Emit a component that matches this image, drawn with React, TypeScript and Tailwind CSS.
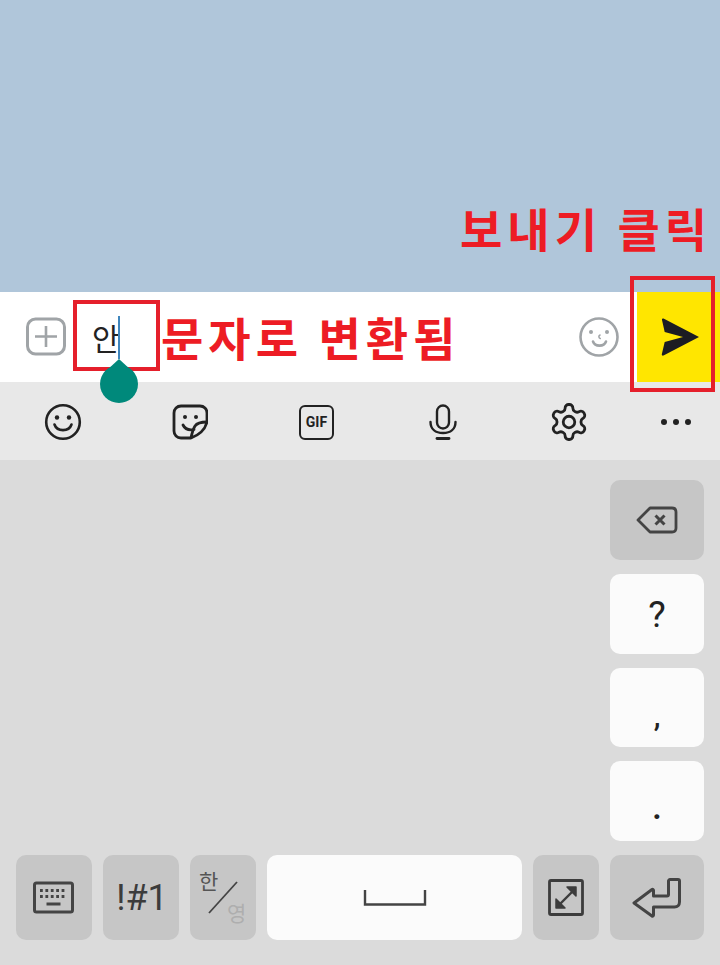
import React from "react";

const kr = "font-['Noto_Sans_CJK_KR','Noto_Sans',sans-serif]";

function Key({ className, children }: { className: string; children?: React.ReactNode }) {
  return <div className={`flex items-center justify-center rounded-[10px] ${className}`}>{children}</div>;
}

const dark = "bg-[#c6c6c6]";
const light = "bg-[#fbfbfb]";

export default function App() {
  return (
    <div className={`relative flex h-[965px] w-[720px] flex-col overflow-hidden ${kr}`}>
      <div className="h-[292px] bg-[#b0c6da]" />

      {/* input bar */}
      <div className="flex h-[90px] items-center bg-white">
        <svg className="ml-[26px]" width="40" height="40" viewBox="0 0 40 40" fill="none" stroke="#a0a4a7" strokeWidth="3">
          <rect x="1.5" y="2" width="37" height="35" rx="8" />
          <path d="M20 9v21M9 19.5h22" strokeWidth="2.6" />
        </svg>
        <div className="ml-[26px] flex h-[44px] items-center">
          <span className="text-[30px] leading-none text-[#222]">안</span>
          <span className="ml-[-2px] h-[43px] w-[2px] bg-[#3f86bd]" />
        </div>
        <div className="ml-auto mr-[18px]">
          <svg width="40" height="40" viewBox="0 0 40 40" fill="none" stroke="#a0a4a7" className="block">
            <circle cx="20" cy="20" r="18.5" strokeWidth="2.6" />
            <path d="M14 24.500c2 5.500 11 5.500 13 0" strokeWidth="2.6" strokeLinecap="round" />
            <circle cx="12" cy="15" r="2" fill="#a0a4a7" stroke="none" />
            <circle cx="28" cy="15" r="2" fill="#a0a4a7" stroke="none" />
            <path d="M21 18c-1.500 .500-1.500 3 .200 3.500" strokeWidth="1.600" strokeLinecap="round" />
          </svg>
        </div>
        <div className="flex h-full w-[83px] items-center justify-center bg-[#ffe600]">
          <svg width="40" height="40" viewBox="0 0 40 40" className="ml-[2px] block">
            <path d="M3.5 1.5 39 20 3.5 38.6c-1 .4-1.9-.3-1.7-1.3L4.7 25 23 20 4.7 15 2 2.9c-.2-1 .6-1.8 1.5-1.4z" fill="#1c1c22" />
          </svg>
        </div>
      </div>

      {/* toolbar */}
      <div className="flex h-[78px] items-center bg-[#e8e8e8] pt-[2px]">
        <div className="ml-[44px] w-[38px]">
          <svg width="38" height="38" viewBox="0 0 38 38" fill="none" stroke="#222" strokeWidth="2.6" className="block">
            <circle cx="19" cy="19" r="16.8" />
            <path d="M10.5 21.5c2.5 7.5 14.5 7.5 17 0" strokeLinecap="round" />
            <circle cx="13" cy="14.5" r="2.2" fill="#222" stroke="none" />
            <circle cx="25" cy="14.5" r="2.2" fill="#222" stroke="none" />
          </svg>
        </div>
        <div className="ml-[90px] w-[36px]">
          <svg width="36" height="36" viewBox="0 0 36 36" fill="none" stroke="#222" strokeWidth="2.8" strokeLinejoin="round" className="block">
            <path d="M19 34H9c-4 0-7-3-7-7V9c0-4 3-7 7-7h19c4 0 7 3 7 7v9c-2 8-8 13-16 16z" />
            <path d="M35 18c-6 0-10 1-12 4-2 3-3 7-4 12" />
            <path d="M11 21c2 4 6 5.500 11 4.500" strokeLinecap="round" />
            <circle cx="13" cy="13" r="2" fill="#222" stroke="none" />
            <circle cx="24" cy="13" r="2" fill="#222" stroke="none" />
          </svg>
        </div>
        <div className="ml-[91px] flex h-[35px] w-[35px] items-center justify-center rounded-[6px] border-[2.6px] border-[#222]">
          <span className="font-['Roboto',sans-serif] text-[14px] font-bold leading-none text-[#222]">GIF</span>
        </div>
        <div className="ml-[95px] w-[28px]">
          <svg width="28" height="36" viewBox="0 0 28 36" fill="none" stroke="#222" strokeWidth="2.4" strokeLinecap="round" className="block">
            <rect x="8" y="1.500" width="12" height="23" rx="6" />
            <path d="M1.500 18c0 7 5 11 12.500 11s12.500-4 12.500-11" />
            <path d="M8 34.500h12" strokeWidth="2.800" />
          </svg>
        </div>
        <div className="ml-[91px] w-[42px]">
          <svg width="42" height="42" viewBox="0 0 24 24" fill="none" stroke="#222" strokeWidth="1.600" strokeLinejoin="round" className="block">
            <path d="M12.220 2h-.44a2 2 0 0 0-2 2v.18a2 2 0 0 1-1 1.730l-.43.250a2 2 0 0 1-2 0l-.15-.08a2 2 0 0 0-2.730.730l-.22.380a2 2 0 0 0 .730 2.730l.150.100a2 2 0 0 1 1 1.720v.510a2 2 0 0 1-1 1.740l-.150.090a2 2 0 0 0-.730 2.730l.22.380a2 2 0 0 0 2.730.730l.150-.08a2 2 0 0 1 2 0l.43.250a2 2 0 0 1 1 1.730V20a2 2 0 0 0 2 2h.44a2 2 0 0 0 2-2v-.18a2 2 0 0 1 1-1.730l.43-.250a2 2 0 0 1 2 0l.150.080a2 2 0 0 0 2.730-.730l.22-.390a2 2 0 0 0-.730-2.730l-.150-.080a2 2 0 0 1-1-1.740v-.500a2 2 0 0 1 1-1.740l.150-.090a2 2 0 0 0 .730-2.730l-.22-.380a2 2 0 0 0-2.730-.730l-.150.080a2 2 0 0 1-2 0l-.43-.250a2 2 0 0 1-1-1.730V4a2 2 0 0 0-2-2z" />
            <circle cx="12" cy="12" r="3.300" />
          </svg>
        </div>
        <div className="ml-[71px] flex gap-[6px]">
          <span className="h-[6px] w-[6px] rounded-full bg-[#222]" />
          <span className="h-[6px] w-[6px] rounded-full bg-[#222]" />
          <span className="h-[6px] w-[6px] rounded-full bg-[#222]" />
        </div>
      </div>

      {/* keyboard */}
      <div className="flex flex-1 flex-col gap-[14px] bg-[#dbdbdb] pl-[16px] pr-[16px] pt-[20px]">
        <div className="flex flex-col items-end gap-[14px]">
          <Key className={`h-[80px] w-[94px] ${dark}`}>
            <svg width="42" height="28" viewBox="0 0 42 28" fill="none" stroke="#444" strokeWidth="2.8" strokeLinejoin="round" className="block">
              <path d="M14 2h22c2.500 0 4 1.500 4 4v16c0 2.500-1.500 4-4 4H14L2 14z" />
              <path d="M19.500 9.500l9 9M28.500 9.500l-9 9" strokeWidth="3" />
            </svg>
          </Key>
          <Key className={`h-[80px] w-[94px] ${light}`}>
            <span className="font-['Roboto',sans-serif] text-[37px] leading-none text-[#222]">?</span>
          </Key>
          <Key className={`h-[79px] w-[94px] ${light}`}>
            <span className="mt-[17px] font-['Roboto',sans-serif] text-[30px] font-medium leading-none text-[#222]">,</span>
          </Key>
          <Key className={`h-[80px] w-[94px] ${light}`}>
            <span className="mt-[12px] font-['Roboto',sans-serif] text-[36px] font-medium leading-none text-[#222]">.</span>
          </Key>
        </div>
        <div className="flex h-[85px] gap-[11px]">
          <Key className={`w-[76px] ${dark}`}>
            <svg width="42" height="34" viewBox="0 0 42 34" fill="none" className="block">
              <rect x="1.500" y="2" width="38" height="29" rx="2" stroke="#444" strokeWidth="3" />
              <path d="M7 9.500h27M7 15.500h27" stroke="#444" strokeWidth="2.800" strokeDasharray="2.800 2.600" />
              <path d="M13.500 23h14" stroke="#444" strokeWidth="3" />
            </svg>
          </Key>
          <Key className={`w-[76px] ${dark}`}>
            <span className="ml-[2px] mt-[1px] font-['Roboto',sans-serif] text-[36px] leading-none text-[#3c3c3c]">!#1</span>
          </Key>
          <Key className={`relative w-[66px] ${dark}`}>
            <span className="absolute left-[9px] top-[15px] text-[21px] leading-none text-[#555]">한</span>
            <svg width="32" height="36" viewBox="0 0 32 36" className="absolute left-[17px] top-[25px]">
              <path d="M2 33 30 2" stroke="#444" strokeWidth="1.800" />
            </svg>
            <span className="absolute left-[37px] top-[47px] text-[21px] leading-none text-[#aeaeae]">영</span>
          </Key>
          <Key className={`w-[255px] ${light}`}>
            <svg width="64" height="20" viewBox="0 0 64 20" fill="none" className="block">
              <path d="M2 2v14.500h60V2" stroke="#444" strokeWidth="2.400" />
            </svg>
          </Key>
          <Key className={`w-[66px] ${dark}`}>
            <svg width="36" height="37" viewBox="0 0 36 37" fill="none" stroke="#3c3c3c" strokeWidth="2.800" strokeLinejoin="round" className="block">
              <rect x="1.500" y="1.500" width="33" height="34" rx="1.500" />
              <path d="M10 27 27 10" strokeWidth="2.400" />
              <path d="M8 20v9h9zM19 8h9v9z" fill="#3c3c3c" strokeWidth="1.500" />
            </svg>
          </Key>
          <Key className={`w-[94px] ${dark}`}>
            <svg width="50" height="42" viewBox="0 0 50 42" fill="none" stroke="#444" strokeWidth="3" strokeLinejoin="round" className="block">
              <path d="M2 26 20 12.500c.700-.500 1.500 0 1.500 1V19H35c.800 0 1.500-.700 1.500-1.500V4c0-.800.700-1.500 1.500-1.500h8c.800 0 1.500.700 1.500 1.500v21c0 3-2 5-5 5H21.500v8c0 1-.800 1.500-1.500 1z" />
            </svg>
          </Key>
        </div>
      </div>

      {/* annotations lying over the interface */}
      <span className="absolute left-[460px] top-[194px] whitespace-nowrap text-[46px] font-bold leading-[66px] tracking-[5px] text-[#ed1c24]">보내기 클릭</span>
      <span className="absolute left-[161px] top-[303px] whitespace-nowrap text-[46px] font-bold leading-[66px] tracking-[5px] text-[#ed1c24]">문자로 변환됨</span>
      <div className="absolute left-[73px] top-[300px] h-[71px] w-[87px] border-[4px] border-[#e51f2b]" />
      <div className="absolute left-[630px] top-[276px] h-[116px] w-[85px] border-[4px] border-[#e51f2b]" />
      <svg className="absolute left-[99px] top-[358px]" width="40" height="46" viewBox="0 0 40 46">
        <circle cx="20" cy="26" r="19" fill="#00897b" />
        <path d="M20 1 33 13H7z" fill="#00897b" />
      </svg>
    </div>
  );
}
